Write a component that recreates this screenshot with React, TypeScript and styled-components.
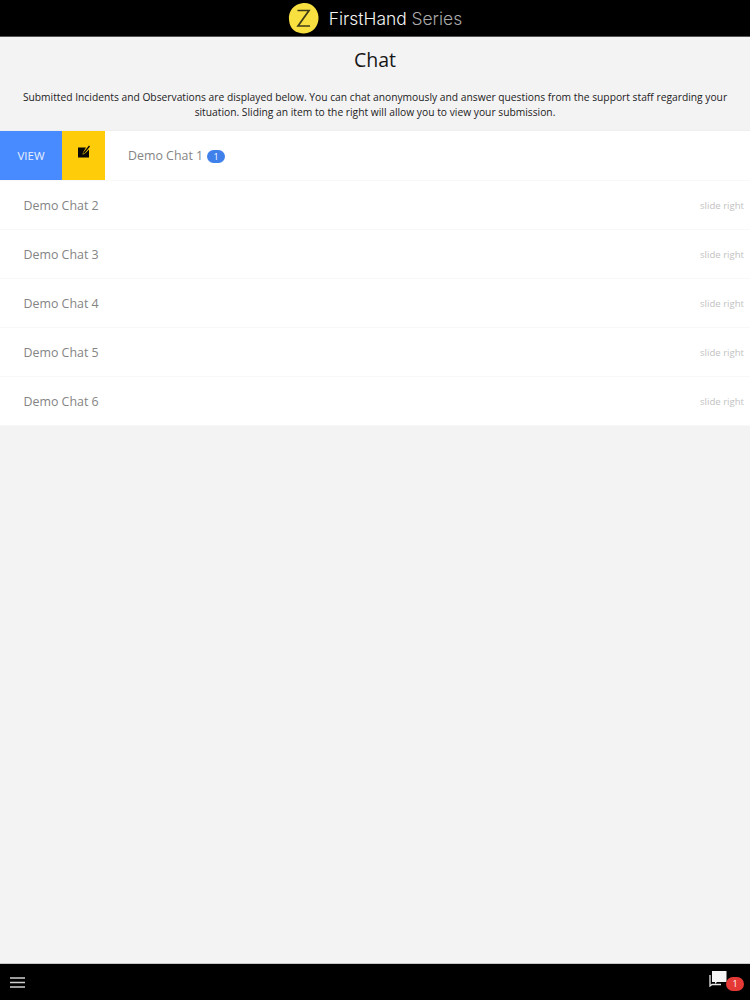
import React from "react";
import styled, { createGlobalStyle } from "styled-components";

const Global = createGlobalStyle`
  html, body { margin: 0; padding: 0; background: #f4f3f4; }
  body { font-family: "Open Sans", "Liberation Sans", sans-serif; }
`;

const Page = styled.div`
  width: 750px;
  height: 1000px;
  display: flex;
  flex-direction: column;
  background: #f4f3f4;
  overflow: hidden;
`;

const Header = styled.header`
  height: 36px;
  flex: none;
  background: #000;
  border-bottom: 1px solid #555;
  display: flex;
  align-items: center;
  justify-content: center;
  gap: 10px;
`;

const Brand = styled.div`
  font-family: Inter, "Open Sans", sans-serif;
  font-size: 17.4px;
  font-weight: 300;
  color: #f4f4f4;
  white-space: nowrap;
`;

const BrandLight = styled.span`
  color: #a9a9a9;
  font-weight: 300;
`;

const Main = styled.main`
  flex: 1;
  display: flex;
  flex-direction: column;
`;

const Title = styled.h1`
  margin: 0;
  padding-top: 9px;
  height: 38px;
  font-size: 19.5px;
  line-height: 27px;
  font-weight: 400;
  text-align: center;
  color: #161616;
`;

const Intro = styled.p`
  margin: 0;
  padding: 6px 20px 0;
  height: 40px;
  font-size: 10.27px;
  line-height: 15px;
  text-align: center;
  color: #222;
`;

const List = styled.ul`
  list-style: none;
  margin: 0;
  padding: 0;
  background: #fff;
  border-top: 1px solid #eeeef0;
`;

const Row = styled.li<{ $open?: boolean }>`
  height: ${(p) => (p.$open ? "50px" : "49px")};
  box-sizing: border-box;
  display: flex;
  align-items: center;
  border-bottom: 1px solid #f8f8f9;
  padding-left: ${(p) => (p.$open ? "0" : "23.5px")};
  padding-right: 6px;
  background: #fff;
`;

const ViewAction = styled.div`
  width: 62px;
  height: 49px;
  background: #488aff;
  color: #eaf1ff;
  font-size: 11.5px;
  display: flex;
  align-items: center;
  justify-content: center;
`;

const EditAction = styled.div`
  width: 43px;
  height: 49px;
  margin-right: 23px;
  background: #ffcc0a;
  display: flex;
  justify-content: center;
  padding-top: 14px;
  box-sizing: border-box;
`;

const RowName = styled.span`
  font-size: 12.4px;
  color: #848484;
`;

const Badge = styled.span`
  margin-left: 4px;
  width: 18px;
  height: 13px;
  margin-top: 2px;
  border-radius: 7px;
  background: #3f80ea;
  color: #fff;
  font-size: 9px;
  line-height: 13px;
  text-align: center;
`;

const Hint = styled.span`
  margin-left: auto;
  font-size: 9.6px;
  color: #c2c2c2;
`;

const Footer = styled.footer`
  height: 37px;
  flex: none;
  background: #000;
  border-top: 1px solid #c9c9c9;
  box-sizing: border-box;
  display: flex;
  align-items: center;
  justify-content: space-between;
  padding: 0 6px 0 10px;
`;

const ChatButton = styled.div`
  position: relative;
  width: 34px;
  height: 32px;
`;

const Count = styled.span`
  position: absolute;
  right: 0;
  top: 11px;
  width: 18px;
  height: 14px;
  border-radius: 7px;
  background: #e53935;
  color: #fff;
  font-size: 9px;
  line-height: 14px;
  text-align: center;
`;

const ChatsGlyph = styled.svg`
  position: absolute;
  left: -2px;
  top: 3px;
`;

const chats = ["Demo Chat 2", "Demo Chat 3", "Demo Chat 4", "Demo Chat 5", "Demo Chat 6"];

const Logo = () => (
  <svg width="31" height="32" viewBox="0 0 31 32" aria-hidden="true">
    <path d="M15 1C23 0 30 6 30.500 15C31 24 25 31 16 31.500C8 31 2 28 1 18C0 9 6 2 15 1Z" fill="#f8e041" />
    <path d="M9.500 8.500H21L10 24H22" fill="none" stroke="#3f3b17" strokeWidth="1.700" />
  </svg>
);

const EditIcon = () => (
  <svg width="14" height="14" viewBox="0 0 14 14" aria-hidden="true">
    <path d="M1 2.500H9L6 7.500L5.500 9.500L7.500 9L12 4.500V12.500H1Z" fill="#080808" />
    <path d="M6.500 8.500L12.500 1" stroke="#080808" strokeWidth="1.300" fill="none" />
  </svg>
);

const Menu = () => (
  <svg width="15" height="11" viewBox="0 0 15 11" aria-hidden="true">
    <path d="M0 1H15M0 5.500H15M0 10H15" stroke="#cfcfcf" strokeWidth="1.500" />
  </svg>
);

const Chats = () => (
  <ChatsGlyph width="22" height="20" viewBox="0 0 22 20" aria-hidden="true">
    <path d="M4 2H18.500V13H9L7 15V13H4Z" fill="#f4f4f4" />
    <path d="M2 6V17L4 15.500H13" stroke="#e8e8e8" strokeWidth="1.300" fill="none" />
  </ChatsGlyph>
);

export default function App() {
  return (
    <Page>
      <Global />
      <Header>
        <Logo />
        <Brand>
          FirstHand <BrandLight>Series</BrandLight>
        </Brand>
      </Header>
      <Main>
        <Title>Chat</Title>
        <Intro>
          Submitted Incidents and Observations are displayed below. You can chat anonymously and answer questions from the support staff regarding your situation. Sliding an item to the right will allow you to view your submission.
        </Intro>
        <List>
          <Row $open>
            <ViewAction>VIEW</ViewAction>
            <EditAction>
              <EditIcon />
            </EditAction>
            <RowName>Demo Chat 1</RowName>
            <Badge>1</Badge>
          </Row>
          {chats.map((c) => (
            <Row key={c}>
              <RowName>{c}</RowName>
              <Hint>slide right</Hint>
            </Row>
          ))}
        </List>
      </Main>
      <Footer>
        <Menu />
        <ChatButton>
          <Chats />
          <Count>1</Count>
        </ChatButton>
      </Footer>
    </Page>
  );
}
